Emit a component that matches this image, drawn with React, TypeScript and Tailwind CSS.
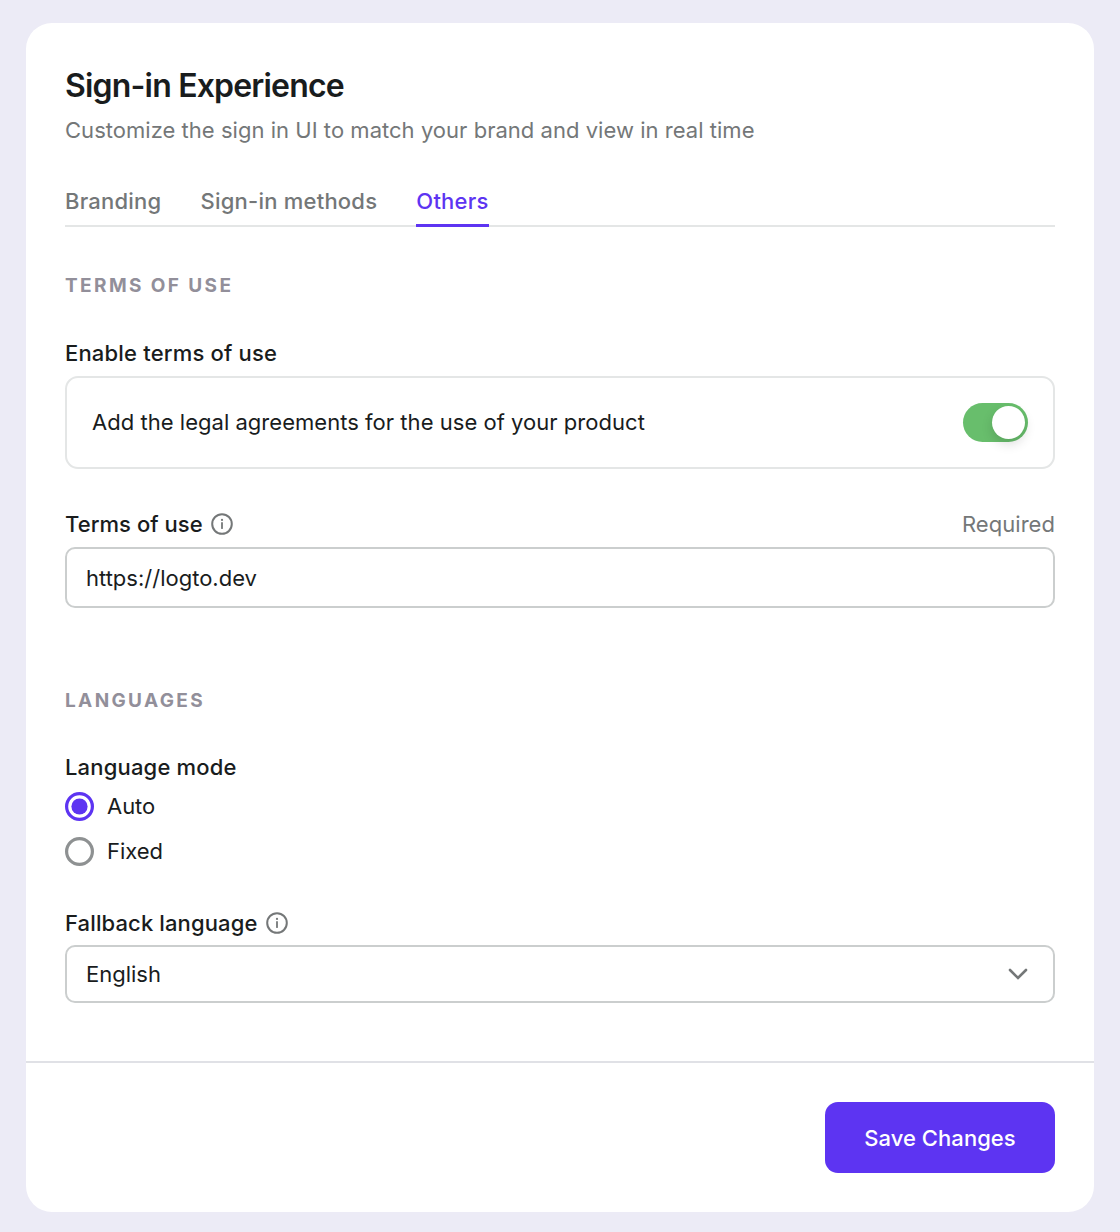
import React, { useState } from 'react';

function InfoIcon() {
  return (
    <svg className="size-[22px] text-[#747778]" viewBox="0 0 22 22" fill="none">
      <circle cx="11" cy="11" r="9.8" stroke="currentColor" strokeWidth="2" />
      <circle cx="11" cy="6.9" r="1.1" fill="currentColor" />
      <path d="M11 10v5.2" stroke="currentColor" strokeWidth="1.8" strokeLinecap="round" />
    </svg>
  );
}

function Radio({ label, checked, onSelect }: { label: string; checked: boolean; onSelect: () => void }) {
  return (
    <button type="button" role="radio" aria-checked={checked} onClick={onSelect} className="flex h-[29px] items-center gap-[13px] text-[22px] tracking-[-0.05px]">
      <svg className="size-[29px]" viewBox="0 0 29 29" fill="none">
        <circle cx="14.5" cy="14.5" r="12.9" strokeWidth="3.2" className={checked ? 'stroke-[#5d34f2]' : 'stroke-[#8e9192]'} />
        {checked && <circle cx="14.5" cy="14.5" r="8.1" className="fill-[#5d34f2]" />}
      </svg>
      {label}
    </button>
  );
}

export default function App() {
  const [mode, setMode] = useState('Auto');
  return (
    <div className="h-[1232px] w-[1120px] bg-[#ecebf6] px-[26px] pt-[23px] font-['Inter',sans-serif] text-[#191c1d]">
      <main className="flex h-[1189px] flex-col rounded-[26px] bg-white">
        <div className="h-[1040px] border-b-2 border-[#e0e1e6] px-[39px] pt-[43px]">
          <h1 className="h-[40px] text-[32px] leading-[40px] font-semibold tracking-[-0.82px]">Sign-in Experience</h1>
          <p className="mt-[8px] h-[32px] text-[22px] leading-[33px] tracking-[0.03px] text-[#747778]">Customize the sign in UI to match your brand and view in real time</p>
          <nav className="mt-[35px] flex h-[46px] gap-[39px] border-b-2 border-[#e4e6e6] text-[22px] leading-[40px] font-medium tracking-[0.23px] text-[#747778]">
            <a className="h-[46px]">Branding</a>
            <a className="h-[46px]">Sign-in methods</a>
            <a className="h-[46px] border-b-3 border-[#5d34f2] text-[#5d34f2]">Others</a>
          </nav>
          <h2 className="mt-[43px] h-[32px] text-[19px] leading-[32px] font-bold tracking-[2.4px] text-[#928f9a]">TERMS OF USE</h2>
          <div className="mt-[35px] h-[32px] text-[22px] leading-[32px] font-medium tracking-[0.18px]">Enable terms of use</div>
          <div className="mt-[7px] flex h-[93px] items-center justify-between rounded-[13px] border-2 border-[#e4e6e6] pr-[25px] pl-[26px]">
            <span className="-ml-px text-[22px] tracking-[0.03px]">Add the legal agreements for the use of your product</span>
            <span className="flex h-[39px] w-[65px] items-center justify-end rounded-full bg-[#68be6c] p-[3px]">
              <span className="size-[33px] rounded-full bg-white shadow-[0_5px_12px_rgba(0,0,0,0.14)]" />
            </span>
          </div>
          <div className="mt-[39px] flex h-[32px] items-center gap-[8px] text-[22px] font-medium tracking-[0.05px]">
            <span>Terms of use</span>
            <InfoIcon />
            <span className="ml-auto font-normal text-[#747778]">Required</span>
          </div>
          <input className="mt-[7px] block h-[61px] w-full rounded-[10px] border-2 border-[#cbcece] px-[19px] text-[22px]" defaultValue="https://logto.dev" />
          <h2 className="mt-[77px] h-[32px] text-[19px] leading-[32px] font-bold tracking-[2.35px] text-[#928f9a]">LANGUAGES</h2>
          <div className="mt-[34px] h-[32px] text-[22px] leading-[32px] font-medium tracking-[0.18px]">Language mode</div>
          <div className="mt-[9px] flex flex-col gap-[16px]" role="radiogroup">
            <Radio label="Auto" checked={mode === 'Auto'} onSelect={() => setMode('Auto')} />
            <Radio label="Fixed" checked={mode === 'Fixed'} onSelect={() => setMode('Fixed')} />
          </div>
          <div className="mt-[41px] flex h-[32px] items-center gap-[9px] text-[22px] font-medium tracking-[0.12px]">
            <span>Fallback language</span>
            <InfoIcon />
          </div>
          <div className="mt-[6px] flex h-[58px] items-center justify-between rounded-[10px] border-2 border-[#cbcece] pr-[25px] pl-[19px] text-[22px]">
            English
            <svg className="h-[12px] w-[20px] text-[#747778]" viewBox="0 0 20 12" fill="none">
              <path d="M2 2l8 8 8-8" stroke="currentColor" strokeWidth="2.6" strokeLinecap="round" />
            </svg>
          </div>
        </div>
        <footer className="flex justify-end px-[39px] pt-[39px]">
          <button className="h-[71px] w-[230px] rounded-[13px] bg-[#5d34f2] pt-px text-[22px] font-medium tracking-[0.05px] text-white">Save Changes</button>
        </footer>
      </main>
    </div>
  );
}
